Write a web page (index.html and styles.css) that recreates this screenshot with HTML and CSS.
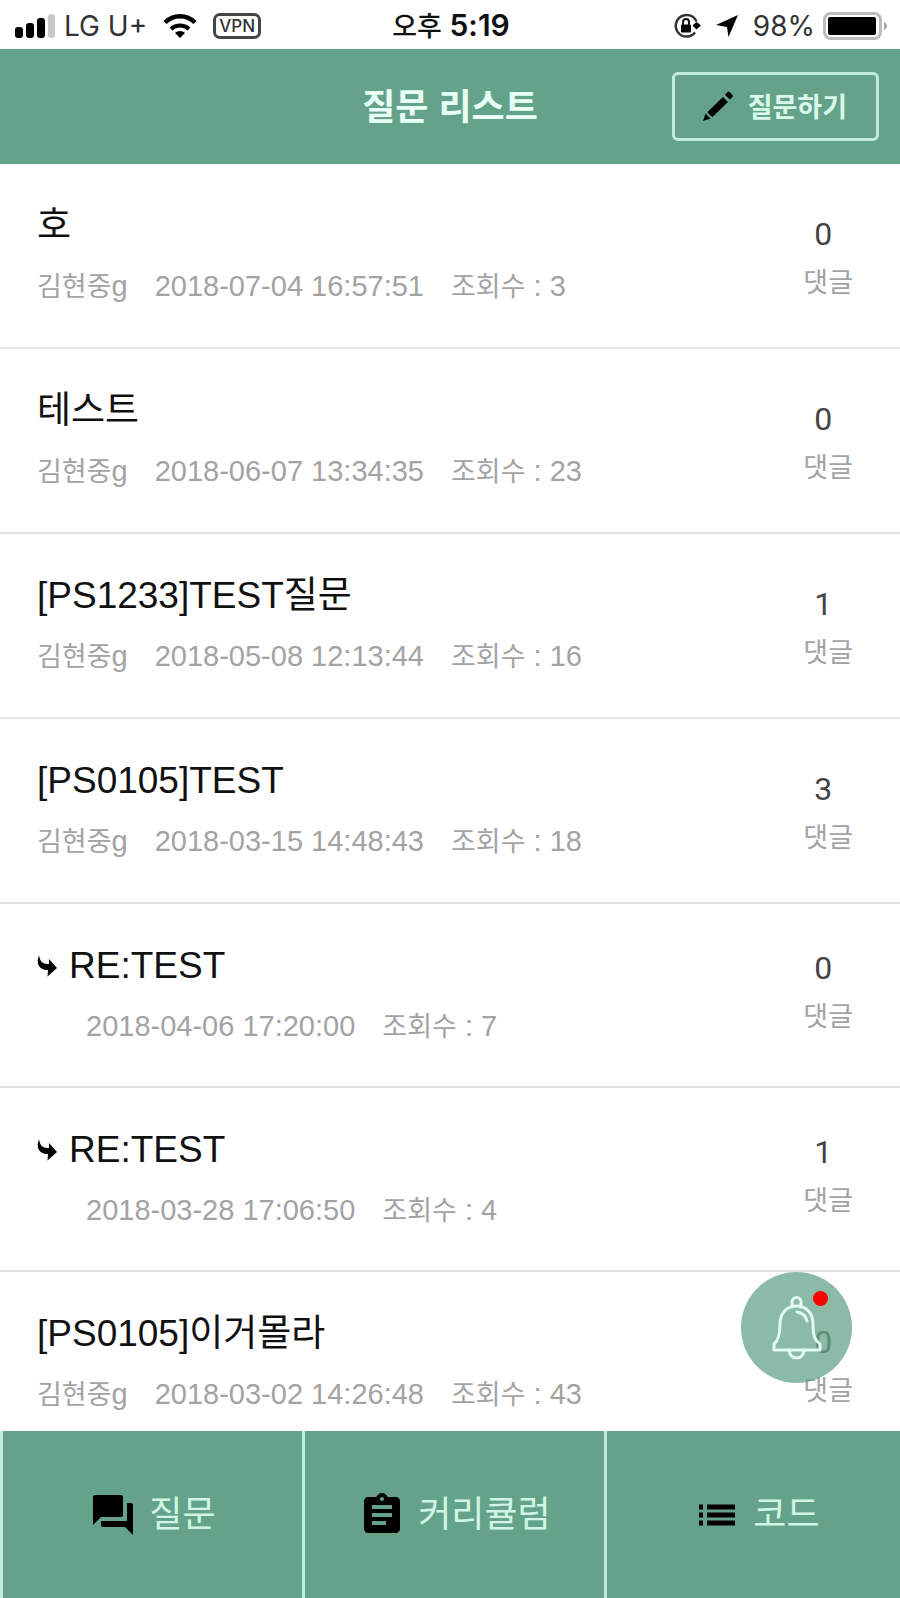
FILE: index.html
```
<!DOCTYPE html>
<html lang="ko">
<head>
    <meta charset="utf-8">
    <meta name="viewport" content="width=device-width, initial-scale=1">
    <title>질문 리스트</title>
    <link rel="stylesheet" href="styles.css">
</head>
<body>
    <div class="status-bar">
        <div class="status-left">
            <svg class="signal" width="42" height="26" viewBox="0 0 42 26">
                <rect x="1" y="14" width="8" height="11" rx="3"/>
                <rect x="12" y="10" width="8" height="15" rx="3"/>
                <rect x="23" y="5" width="8" height="20" rx="3"/>
                <rect x="34" y="1" width="7" height="24" rx="3" fill="#c8c8c8"/>
            </svg>
            <span>LG U+</span>
            <svg class="wifi" width="36" height="26" viewBox="0 0 36 26">
                <path d="M3 9.500a21 21 0 0 1 30 0" fill="none" stroke="#000" stroke-width="4.500"/>
                <path d="M9 16a13 13 0 0 1 18 0" fill="none" stroke="#000" stroke-width="4"/>
                <path d="M18 25l-5-5a7 7 0 0 1 10 0z"/>
            </svg>
            <span class="vpn">VPN</span>
        </div>
        <div class="status-time"><span class="ampm">오후</span> 5:19</div>
        <div class="status-right">
            <svg class="lock" width="28" height="28" viewBox="0 0 28 28">
                <path d="M22 20.500A10.800 10.800 0 1 1 23.500 9.500" fill="none" stroke="#333" stroke-width="2.500"/>
                <path d="M19.500 13.500l4-3.500 4.500 3.500-4.500 4z"/>
                <rect x="8" y="12.500" width="10" height="8" rx="1"/>
                <path d="M10 13v-3a3 3 0 0 1 6 0v3" fill="none" stroke="#111" stroke-width="2"/>
            </svg>
            <svg class="arrow" width="24" height="24" viewBox="0 0 24 24">
                <path d="M23 1L13.500 23l-1.500-10L1 11z"/>
            </svg>
            <span>98%</span>
            <svg class="battery" width="65" height="28" viewBox="0 0 65 28">
                <rect x="1.500" y="1.500" width="56" height="25" rx="6" fill="#fff" stroke="#bdbdbd" stroke-width="3"/>
                <rect x="5" y="5" width="48" height="18" rx="2"/>
                <path d="M61 10q3 1 3 4t-3 4z" fill="#aaa"/>
            </svg>
        </div>
    </div>

    <header class="header">
        <h1>질문 리스트</h1>
        <button class="ask-button" type="button">
            <svg width="32" height="32" viewBox="0 0 32 32">
                <path d="M1 31l2.500-7.500 5 5zM6 21.500L21 7l5 5-15 14.500q-1 .5-2-.5l-3-3q-.8-.8 0-1.500zM23 5l2.500-3q1-1 2 0l3 3q1 1 0 2L28 9.500z"/>
            </svg>
            <span>질문하기</span>
        </button>
    </header>

    <main class="content">
        <ul class="question-list">
            <li class="question">
                <div class="question-body">
                    <a class="question-title" href="#">호</a>
                    <div class="question-meta">
                        <span><span class="ko">김현중</span>g</span>
                        <span>2018-07-04 16:57:51</span>
                        <span><span class="ko">조회수</span> : 3</span>
                    </div>
                </div>
                <div class="comments"><span class="comment-count">0</span><span class="ko">댓글</span></div>
            </li>
            <li class="question">
                <div class="question-body">
                    <a class="question-title" href="#">테스트</a>
                    <div class="question-meta">
                        <span><span class="ko">김현중</span>g</span>
                        <span>2018-06-07 13:34:35</span>
                        <span><span class="ko">조회수</span> : 23</span>
                    </div>
                </div>
                <div class="comments"><span class="comment-count">0</span><span class="ko">댓글</span></div>
            </li>
            <li class="question">
                <div class="question-body">
                    <a class="question-title" href="#">[PS1233]TEST질문</a>
                    <div class="question-meta">
                        <span><span class="ko">김현중</span>g</span>
                        <span>2018-05-08 12:13:44</span>
                        <span><span class="ko">조회수</span> : 16</span>
                    </div>
                </div>
                <div class="comments"><span class="comment-count">1</span><span class="ko">댓글</span></div>
            </li>
            <li class="question">
                <div class="question-body">
                    <a class="question-title" href="#">[PS0105]TEST</a>
                    <div class="question-meta">
                        <span><span class="ko">김현중</span>g</span>
                        <span>2018-03-15 14:48:43</span>
                        <span><span class="ko">조회수</span> : 18</span>
                    </div>
                </div>
                <div class="comments"><span class="comment-count">3</span><span class="ko">댓글</span></div>
            </li>
            <li class="question reply">
                <div class="question-body">
                    <a class="question-title" href="#">
                        <svg width="20" height="22" viewBox="0 0 20 22">
                            <path d="M2 0Q0 5 1 9q2 6 10 6l-.500 6.500L20 13l-8-9v5Q3 10 2 0z"/>
                        </svg>
                        RE:TEST
                    </a>
                    <div class="question-meta">
                        <span>2018-04-06 17:20:00</span>
                        <span><span class="ko">조회수</span> : 7</span>
                    </div>
                </div>
                <div class="comments"><span class="comment-count">0</span><span class="ko">댓글</span></div>
            </li>
            <li class="question reply">
                <div class="question-body">
                    <a class="question-title" href="#">
                        <svg width="20" height="22" viewBox="0 0 20 22">
                            <path d="M2 0Q0 5 1 9q2 6 10 6l-.500 6.500L20 13l-8-9v5Q3 10 2 0z"/>
                        </svg>
                        RE:TEST
                    </a>
                    <div class="question-meta">
                        <span>2018-03-28 17:06:50</span>
                        <span><span class="ko">조회수</span> : 4</span>
                    </div>
                </div>
                <div class="comments"><span class="comment-count">1</span><span class="ko">댓글</span></div>
            </li>
            <li class="question">
                <div class="question-body">
                    <a class="question-title" href="#">[PS0105]이거몰라</a>
                    <div class="question-meta">
                        <span><span class="ko">김현중</span>g</span>
                        <span>2018-03-02 14:26:48</span>
                        <span><span class="ko">조회수</span> : 43</span>
                    </div>
                </div>
                <div class="comments"><span class="comment-count">0</span><span class="ko">댓글</span></div>
            </li>
        </ul>

        <button class="alarm-button" type="button" aria-label="알림">
            <svg width="50" height="64" viewBox="0 0 50 64" fill="none" stroke="#e2fbf0" stroke-width="3" stroke-linejoin="round" stroke-linecap="round">
                <path d="M20 11V6a4.500 4.500 0 0 1 9 0v5"/>
                <path d="M24.500 10C14 10 8 18 8 28c0 12-2 17-6 20v6h46v-6c-5-3-7-8-7-20 0-10-6-18-16.500-18z"/>
                <path d="M25 16q8 1 10 9M17 54q1 8 7.500 8t7.500-8"/>
            </svg>
            <span class="alarm-dot"></span>
        </button>
    </main>

    <nav class="tab-bar">
        <a class="tab" href="#">
            <svg width="48" height="48" viewBox="0 0 24 24">
                <path d="M21 6h-2v9H6v2c0 .55.45 1 1 1h11l4 4V7c0-.55-.45-1-1-1zm-4 6V3c0-.55-.45-1-1-1H3c-.55 0-1 .45-1 1v14l4-4h10c.55 0 1-.45 1-1z"/>
            </svg>
            <span>질문</span>
        </a>
        <a class="tab" href="#">
            <svg width="48" height="48" viewBox="0 0 24 24">
                <path d="M19 3h-4.180C14.400 1.840 13.300 1 12 1c-1.300 0-2.400.84-2.820 2H5c-1.100 0-2 .9-2 2v14c0 1.100.9 2 2 2h14c1.100 0 2-.9 2-2V5c0-1.100-.9-2-2-2zm-7 0c.55 0 1 .45 1 1s-.45 1-1 1-1-.45-1-1 .45-1 1-1zm2 14H7v-2h7v2zm3-4H7v-2h10v2zm0-4H7V7h10v2z"/>
            </svg>
            <span>커리큘럼</span>
        </a>
        <a class="tab" href="#">
            <svg width="48" height="48" viewBox="0 0 24 24">
                <path d="M3 13.200h2v-2.400H3v2.400zm0 4h2v-2.400H3v2.400zm0-8h2V6.800H3v2.400zm4 4h14v-2.400H7v2.400zm0 4h14v-2.400H7v2.400zM7 6.800v2.400h14V6.800H7z"/>
            </svg>
            <span>코드</span>
        </a>
    </nav>
</body>
</html>
```
FILE: styles.css
```
* {
    box-sizing: border-box;
}

body {
    margin: 0;
    height: 100vh;
    display: flex;
    flex-direction: column;
    overflow: hidden;
    background-color: #fff;
    color: #111;
    font-family: "Liberation Sans", "Noto Sans CJK KR", sans-serif;
}

svg {
    display: block;
    flex-shrink: 0;
}

a {
    color: inherit;
    text-decoration: none;
}

button {
    font-family: inherit;
    cursor: pointer;
}

/* Status bar */
.status-bar {
    flex: 0 0 49px;
    display: grid;
    grid-template-columns: 1fr auto 1fr;
    align-items: center;
    padding: 2px 12px 0 14px;
    font-family: Inter, "Noto Sans CJK KR", sans-serif;
    font-size: 28px;
    line-height: 32px;
    color: #333;
}

.status-left,
.status-right {
    display: flex;
    align-items: center;
    gap: 8px;
}

.status-right {
    justify-content: flex-end;
}

.wifi {
    margin: 0 7px;
}

.vpn {
    border: 3px solid #444;
    border-radius: 7px;
    padding: 0 3px;
    font-size: 17px;
    font-weight: 500;
    line-height: 20px;
}

.status-time {
    font-size: 30px;
    font-weight: 600;
    color: #111;
}

.ampm {
    font-size: 27px;
    font-weight: 500;
}

.lock,
.arrow {
    margin-right: 6px;
}

/* Header */
.header {
    flex: 0 0 115px;
    display: grid;
    grid-template-columns: 1fr auto 1fr;
    align-items: center;
    padding: 0 21px;
    background-color: #64a38a;
    color: #e8fff6;
}

.header h1 {
    grid-column: 2;
    margin: 0;
    padding-top: 3px;
    font-size: 36px;
    line-height: 48px;
}

.ask-button {
    justify-self: end;
    display: flex;
    align-items: center;
    gap: 14px;
    height: 69px;
    padding: 0 29px 2px 27px;
    border: 3px solid #c2ecda;
    border-radius: 6px;
    background: none;
    color: #d8f8ea;
    font-size: 27px;
    font-weight: 700;
}

/* Question list */
.content {
    flex: 1;
    min-height: 0;
    position: relative;
    overflow: hidden;
}

.question-list {
    list-style: none;
    margin: 0;
    padding: 0;
}

.question {
    display: flex;
    justify-content: space-between;
    height: 185px;
    padding: 39px 47px 0 37px;
    border-bottom: 2px solid #e4e4e4;
}

.question-title {
    display: flex;
    align-items: center;
    gap: 12px;
    font-size: 37px;
    line-height: 46px;
}

.question-meta {
    display: flex;
    gap: 27px;
    margin-top: 19px;
    font-size: 29px;
    line-height: 36px;
    color: #a3a3a3;
    white-space: nowrap;
}

.ko {
    font-size: 27px;
}

.comments {
    display: flex;
    flex-direction: column;
    align-items: center;
    gap: 11px;
    padding-top: 11px;
    line-height: 36px;
    color: #a3a3a3;
}

.comment-count {
    padding-right: 10px;
    font-family: Roboto, sans-serif;
    font-size: 32px;
    line-height: 40px;
    color: #444;
}

.reply {
    height: 184px;
}

.reply .question-meta {
    padding-left: 49px;
}

.reply .comments {
    padding-top: 5px;
}

/* Floating alarm button */
.alarm-button {
    position: absolute;
    right: 48px;
    bottom: 48px;
    width: 111px;
    height: 111px;
    display: flex;
    align-items: center;
    justify-content: center;
    padding: 0;
    border: none;
    border-radius: 50%;
    background-color: rgba(100, 163, 138, 0.75);
}

.alarm-dot {
    position: absolute;
    top: 19px;
    right: 24px;
    width: 15px;
    height: 15px;
    border-radius: 50%;
    background-color: #f00;
}

/* Bottom tabs */
.tab-bar {
    flex: 0 0 167px;
    display: flex;
    background-color: #64a38a;
}

.tab {
    flex: 0 0 calc(100% / 3 + 2px);
    display: flex;
    align-items: center;
    justify-content: center;
    gap: 12px;
    border-left: 3px solid #c2ecda;
    color: #d0f5e6;
    font-size: 36px;
    line-height: 48px;
}
```
